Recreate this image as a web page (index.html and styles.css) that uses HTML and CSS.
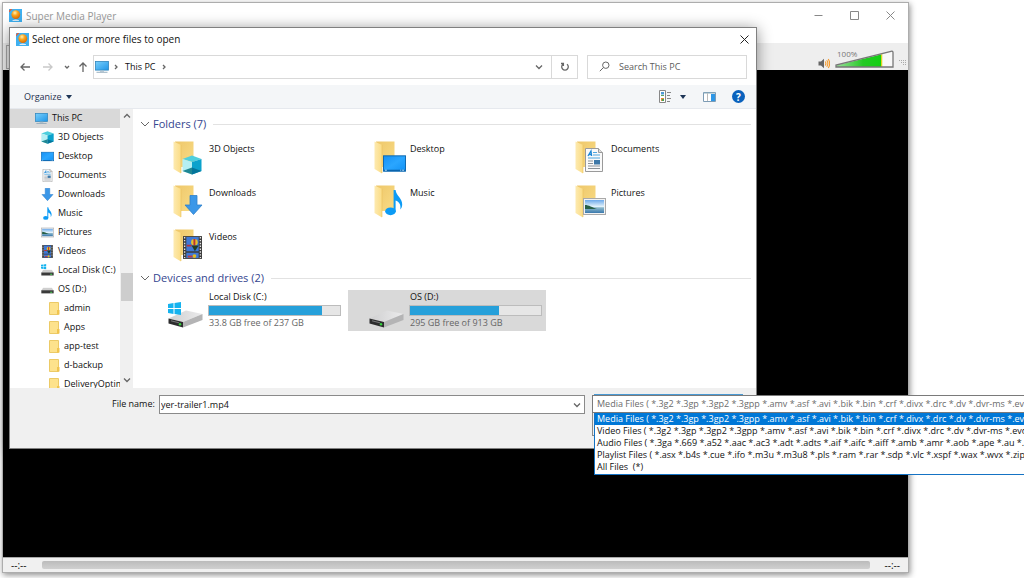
FILE: index.html
```html
<!DOCTYPE html>
<html lang="en">
<head>
<meta charset="utf-8">
<title>Super Media Player</title>
<link rel="stylesheet" href="styles.css">
</head>
<body>
<svg class="sprites" aria-hidden="true">
  <defs>
    <linearGradient id="gFolder" x1="0" y1="0" x2="1" y2="1"><stop offset="0" stop-color="#eec76a"/><stop offset="1" stop-color="#f9dc86"/></linearGradient>
    <linearGradient id="gFlap" x1="0" x2="1"><stop offset="0" stop-color="#fdeab0"/><stop offset="1" stop-color="#fbdc85"/></linearGradient>
    <linearGradient id="gScreen" x1="0" y1="0" x2="1" y2="1"><stop offset="0" stop-color="#7ad0fb"/><stop offset="1" stop-color="#1f95e8"/></linearGradient>
    <linearGradient id="gDesk" x1="0" y1="0" x2="1" y2="1"><stop offset="0" stop-color="#1590f4"/><stop offset=".5" stop-color="#2aa6ff"/><stop offset="1" stop-color="#1191f5"/></linearGradient>
    <linearGradient id="gSky" x1="0" y1="0" x2="0" y2="1"><stop offset="0" stop-color="#6ca9ea"/><stop offset=".5" stop-color="#e2f2fb"/><stop offset=".6" stop-color="#8cb9cb"/><stop offset="1" stop-color="#3a78ad"/></linearGradient>
    <linearGradient id="gVol" x1="0" x2="1"><stop offset="0" stop-color="#9be09b"/><stop offset=".6" stop-color="#25c925"/><stop offset="1" stop-color="#12cf12"/></linearGradient>
    <linearGradient id="gDrive" x1="0" x2="1"><stop offset="0" stop-color="#cfcfd0"/><stop offset="1" stop-color="#ebebec"/></linearGradient>
    <radialGradient id="gBall" cx=".4" cy=".3" r=".7"><stop offset="0" stop-color="#fff0b0"/><stop offset=".45" stop-color="#fba51d"/><stop offset="1" stop-color="#d96a05"/></radialGradient>
  </defs>
  <symbol id="app" viewBox="0 0 13 13"><rect width="13" height="13" fill="#3fb0f0"/><circle cx="6.8" cy="5.6" r="4.4" fill="url(#gBall)"/><path d="M3.5 11.2Q6.8 9.6 10 11.2V12H3.5z" fill="#dceefa"/><path d="M0 3.4L3.4 0H1.4L0 1.4z" fill="#e2603c"/></symbol>
  <symbol id="pc" viewBox="0 0 14 12"><rect x=".5" y=".5" width="13" height="8.6" fill="url(#gScreen)" stroke="#2f86bd" stroke-width=".8"/><path d="M5 9.5h4v1.2H5z" fill="#a8bccb"/><path d="M1.5 10.8h11v.9h-11z" fill="#8da6b8"/></symbol>
  <symbol id="cube" viewBox="0 0 20 20"><path d="M10 .5L19.500 4 10 7 .5 4z" fill="#4fcfdd"/><path d="M.5 4L10 7v12.500L.5 16z" fill="#b5eff3"/><path d="M19.500 4L10 7v12.500L19.500 16z" fill="#0ba2cc"/><path d="M.5 16L10 12.500V19.500z" fill="#1f8794"/><path d="M19.500 16L10 12.500V19.500z" fill="#05759a"/></symbol>
  <symbol id="desk" viewBox="0 0 24 17"><rect x=".5" y=".5" width="23" height="16" fill="url(#gDesk)" stroke="#0c66ae"/><path d="M1 15h22v1.500H1z" fill="#0a64ad"/><path d="M2 15.500h2m14 0h1m1 0h2" stroke="#bfe3fb"/></symbol>
  <symbol id="doc" viewBox="0 0 18 24"><path d="M.5.500h13l4 4v19H.5z" fill="#fafafa" stroke="#9a9a9a"/><path d="M13.500.500v4h4" fill="#dedede" stroke="#9a9a9a"/><path d="M3 8l3-5 .6 5M4 6.500h2.500" fill="none" stroke="#1c87d6" stroke-width="1.300"/><path d="M8 4.500h4M8 7h7M3 10h12" stroke="#4fa6de" stroke-width="1.200"/><path d="M3 13h5M3 15.500h5M3 18h12M3 20.500h12" stroke="#8a9298"/><path d="M9 12h6v4.500H9z" fill="#3d78a8"/></symbol>
  <symbol id="down" viewBox="0 0 18 20"><path d="M5.500.500h7V10h5L9 19.500.500 10h5z" fill="#3b97e8" stroke="#2d80cc" stroke-width=".8"/></symbol>
  <symbol id="note" viewBox="0 0 18 26"><ellipse cx="5.500" cy="21.800" rx="5.300" ry="3.900" fill="#0c9bf5"/><path d="M8.600.500h2C11 6 17.500 9 17.200 15c0 2-.8 4-1.900 5 .8-5-1-7.500-4.700-9V22h-2z" fill="#0c9bf5"/></symbol>
  <symbol id="pic" viewBox="0 0 23 17"><rect x=".5" y=".5" width="22" height="16" fill="#f3f3f3" stroke="#a9a9a9"/><rect x="2" y="2" width="19" height="13" fill="url(#gSky)"/><path d="M2 7c4 0 7 2.500 12 4H2z" fill="#286047"/></symbol>
  <symbol id="film" viewBox="0 0 20 24"><path d="M0 0h20v24H0z" fill="#3c3c3c"/><path d="M3.500 1h13v15h-13zM3.500 17.500h13V23h-13z" fill="#3f78d6"/><path d="M1.700 1v22M18.300 1v22" stroke="#e4e4e4" stroke-width="1.400" stroke-dasharray="1.500 1.500"/><circle cx="12" cy="6.500" r="3.500" fill="#e2c02c"/><path d="M11 3h2v7h-2zM4 9h5v2H4z" fill="#b8323b"/><path d="M9 10l3.500 6 4-6z" fill="#203d24"/><circle cx="12" cy="21" r="2" fill="#e0bc21"/><path d="M5 20.500h5v2H5z" fill="#c23a3d"/></symbol>
  <symbol id="folder" viewBox="0 0 21 33"><path d="M2 .5h18.500V26H6z" fill="url(#gFolder)"/><path d="M.5.500L8 4v28.500L.500 28z" fill="url(#gFlap)"/><path d="M8 4v28" stroke="#eabf5c" stroke-width=".6"/></symbol>
  <symbol id="smallfolder" viewBox="0 0 11 13"><path d="M.5.500h9V12.500h-9z" fill="#fde28c" stroke="#ecca66"/><path d="M8 8h2.500v4.500H8z" fill="#f1c44e"/></symbol>
  <symbol id="win" viewBox="0 0 13 13"><path d="M0 2l5.500-.9V6H0zM6.500 1L13 0v6H6.500zM0 7h5.500v4.900L0 11zM6.500 7H13v6l-6.500-1z" fill="#16b3ef"/></symbol>
  <symbol id="drive" viewBox="0 0 35 18"><path d="M.5 8.500L18 .5 34.500 4 15 12z" fill="url(#gDrive)"/><path d="M15 12L34.500 4v6L15 17.500z" fill="#b4b4b5"/><path d="M.5 8.500L15 12v5.500L.5 13.500z" fill="#2d2d2e"/><path d="M3 10.800l8 2" stroke="#77787a"/><circle cx="12" cy="14.200" r="1.200" fill="#36d63e"/></symbol>
  <symbol id="smalldrive" viewBox="0 0 12 6"><path d="M2 .3h8l1.700 2.700H.3z" fill="#cfcfcf"/><path d="M.3 2.800h11.400v2.900H.3z" fill="#3b3b3b"/><path d="M8.500 4h1.800v.9H8.500z" fill="#4bdc58"/></symbol>
</svg>

<div class="desktop">
  <main class="player">
    <header class="player-title">
      <svg class="app-icon"><use href="#app"/></svg>
      <h1>Super Media Player</h1>
      <div class="window-buttons">
        <button aria-label="Minimize"><svg viewBox="0 0 9 9"><path d="M.5 4.500h8"/></svg></button>
        <button aria-label="Maximize"><svg viewBox="0 0 9 9"><path d="M.5.500h8v8h-8z"/></svg></button>
        <button aria-label="Close"><svg viewBox="0 0 9 9"><path d="M.5.500l8 8m0-8l-8 8"/></svg></button>
      </div>
    </header>
    <div class="player-menu"></div>
    <div class="player-tools">
      <button class="tool" aria-label="Open file"></button>
      <svg class="speaker" viewBox="0 0 12 11"><path d="M.5 3.500H3L6 .8v9.400L3 7.500H.5z" fill="#666"/><path d="M7.200 3.500q1.400 2 0 4M8.700 2.200q2.400 3.300 0 6.600M10.200 1q3 4.500 0 9" fill="none" stroke="#f79a2a" stroke-width="1.100"/></svg>
      <div class="volume">
        <span>100%</span>
        <svg viewBox="0 0 59 18"><path d="M1 17V15.500L46 4.500V17z" fill="url(#gVol)"/><path d="M46 4.500L47.500 4V17H46z" fill="#e0d51c"/><path d="M47.500 4L58 1v16H47.500z" fill="#f8f8f8"/><path d="M1 17V15L56 1.300Q58 .8 58 2.500V17z" fill="none" stroke="#777" stroke-width="1.300"/></svg>
      </div>
      <svg class="grip" viewBox="0 0 7 7"><path d="M0 1.500h7M2 3.500h5M4 5.500h3" stroke="#aaa" stroke-dasharray="1 1"/></svg>
    </div>
    <div class="screen"></div>
    <footer class="player-status"><span>--:--</span><div class="seek"></div><span>--:--</span></footer>
  </main>

  <section class="dialog" role="dialog" aria-labelledby="dialog-title">
    <header class="dialog-title">
      <svg class="app-icon"><use href="#app"/></svg>
      <h2 id="dialog-title">Select one or more files to open</h2>
      <button aria-label="Close"><svg viewBox="0 0 9 9"><path d="M.5.500l8 8m0-8l-8 8"/></svg></button>
    </header>
    <nav class="nav">
      <button class="arrow" aria-label="Back"><svg viewBox="0 0 10 10"><path d="M10 5H1M4.500 1.500L1 5l3.500 3.500"/></svg></button>
      <button class="arrow faded" aria-label="Forward"><svg viewBox="0 0 10 10"><path d="M0 5h9M5.500 1.500L9 5 5.500 8.500"/></svg></button>
      <button class="recent" aria-label="Recent locations"><svg viewBox="0 0 6 6"><path d="M1 2l2 2 2-2"/></svg></button>
      <button class="arrow up" aria-label="Up"><svg viewBox="0 0 10 10"><path d="M5 10V1M1.500 4.500L5 1l3.500 3.500"/></svg></button>
      <div class="address">
        <svg class="pc-icon"><use href="#pc"/></svg>
        <svg class="crumb" viewBox="0 0 6 6"><path d="M2 1l2 2-2 2"/></svg>
        <span>This PC</span>
        <svg class="crumb" viewBox="0 0 6 6"><path d="M2 1l2 2-2 2"/></svg>
        <button class="expand" aria-label="Previous locations"><svg viewBox="0 0 8 8"><path d="M1 2.500l3 3 3-3"/></svg></button>
        <button class="refresh" aria-label="Refresh"><svg viewBox="0 0 10 10"><path d="M7 2.200A3.300 3.300 0 1 1 3 2.200M3.400 4V1.500H1"/></svg></button>
      </div>
      <div class="search">
        <svg viewBox="0 0 11 11"><circle cx="6.800" cy="4.200" r="3.200"/><path d="M4.500 6.500L.800 10.200"/></svg>
        <input type="search" aria-label="Search This PC" placeholder="Search This PC">
      </div>
    </nav>
    <div class="toolbar">
      <button class="organize">Organize <i class="caret"></i></button>
      <button class="view" aria-label="Change view"><svg viewBox="0 0 13 13"><path d="M.5.500h6v12h-6z" fill="#fff" stroke="#888"/><path d="M2 2h3v2.500H2z" fill="#4f9bd8"/><path d="M2 5h3v1H2z" fill="#5aa565"/><path d="M2 8h3v3H2z" fill="#e28d3a"/><path d="M3 9h2v2H3z" fill="#4aa153"/><path d="M8 2.500h4M8 5.500h3M8 8.500h4M8 11.500h3" stroke="#888"/></svg><i class="caret"></i></button>
      <button class="preview" aria-label="Preview pane"><svg viewBox="0 0 13 10"><path d="M.5.500h12v9H.500z" fill="#fff" stroke="#7d9cb5"/><path d="M1 1h11" stroke="#8ab"/><path d="M8 2h4v7H8z" fill="#2e97e6"/><path d="M4.500 1v8" stroke="#bbb"/></svg></button>
      <button class="help" aria-label="Help">?</button>
    </div>
    <div class="browser">
      <ul class="tree">
        <li class="root"><svg><use href="#pc"/></svg>This PC</li>
        <li><svg><use href="#cube"/></svg>3D Objects</li>
        <li><svg><use href="#desk"/></svg>Desktop</li>
        <li><svg><use href="#doc"/></svg>Documents</li>
        <li><svg><use href="#down"/></svg>Downloads</li>
        <li><svg><use href="#note"/></svg>Music</li>
        <li><svg><use href="#pic"/></svg>Pictures</li>
        <li><svg><use href="#film"/></svg>Videos</li>
        <li><svg viewBox="0 0 12 12"><use href="#win" width="5" height="5"/><use href="#smalldrive" y="5" width="12" height="6"/></svg>Local Disk (C:)</li>
        <li><svg viewBox="0 0 12 12"><use href="#smalldrive" y="4" width="12" height="6"/></svg>OS (D:)</li>
        <li class="sub"><svg><use href="#smallfolder"/></svg>admin</li>
        <li class="sub"><svg><use href="#smallfolder"/></svg>Apps</li>
        <li class="sub"><svg><use href="#smallfolder"/></svg>app-test</li>
        <li class="sub"><svg><use href="#smallfolder"/></svg>d-backup</li>
        <li class="sub"><svg><use href="#smallfolder"/></svg>DeliveryOptim</li>
      </ul>
      <div class="scrollbar">
        <svg viewBox="0 0 8 8"><path d="M1 5.500l3-3 3 3"/></svg>
        <div class="thumb"></div>
        <svg viewBox="0 0 8 8"><path d="M1 2.500l3 3 3-3"/></svg>
      </div>
      <div class="files">
        <h3><svg viewBox="0 0 10 8"><path d="M1 2l4 4 4-4"/></svg>Folders (7)</h3>
        <div class="tiles">
          <div class="tile"><svg viewBox="0 0 34 36"><use href="#folder" width="21" height="33"/><use href="#cube" x="9" y="14" width="20" height="20"/></svg><span>3D Objects</span></div>
          <div class="tile"><svg viewBox="0 0 34 36"><use href="#folder" width="21" height="33"/><use href="#desk" x="9" y="14" width="23" height="17"/></svg><span>Desktop</span></div>
          <div class="tile"><svg viewBox="0 0 34 36"><use href="#folder" width="21" height="33"/><use href="#doc" x="10" y="7" width="18" height="24"/></svg><span>Documents</span></div>
          <div class="tile"><svg viewBox="0 0 34 36"><use href="#folder" width="21" height="33"/><use href="#down" x="11" y="10" width="19" height="20"/></svg><span>Downloads</span></div>
          <div class="tile"><svg viewBox="0 0 34 36"><use href="#folder" width="21" height="33"/><use href="#note" x="11" y="4" width="18" height="27"/></svg><span>Music</span></div>
          <div class="tile"><svg viewBox="0 0 34 36"><use href="#folder" width="21" height="33"/><use href="#pic" x="8" y="13" width="23" height="17"/></svg><span>Pictures</span></div>
          <div class="tile"><svg viewBox="0 0 34 36"><use href="#folder" width="21" height="33"/><use href="#film" x="10" y="7" width="19" height="23"/></svg><span>Videos</span></div>
        </div>
        <h3><svg viewBox="0 0 10 8"><path d="M1 2l4 4 4-4"/></svg>Devices and drives (2)</h3>
        <div class="drives">
          <div class="drive">
            <svg viewBox="0 0 36 26"><use href="#drive" x="0" y="8" width="35" height="18"/><use href="#win" x="0" y="0" width="13" height="13"/></svg>
            <div><span>Local Disk (C:)</span><div class="meter"><div style="width:86%"></div></div><small>33.8 GB free of 237 GB</small></div>
          </div>
          <div class="drive selected">
            <svg viewBox="0 0 36 26"><use href="#drive" x="0" y="8" width="35" height="18"/></svg>
            <div><span>OS (D:)</span><div class="meter"><div style="width:68%"></div></div><small>295 GB free of 913 GB</small></div>
          </div>
        </div>
      </div>
    </div>
    <footer class="name-row">
      <label for="filename">File name:</label>
      <div class="combo"><input id="filename" type="text" value="yer-trailer1.mp4"><svg viewBox="0 0 8 8"><path d="M1 2.500l3 3 3-3"/></svg></div>
    </footer>
  </section>

  <section class="filter" aria-label="File type">
    <button class="filter-value">Media Files ( *.3g2 *.3gp *.3gp2 *.3gpp *.amv *.asf *.avi *.bik *.bin *.crf *.divx *.drc *.dv *.dvr-ms *.evo *</button>
    <ul class="filter-list" role="listbox">
      <li class="active" role="option" aria-selected="true">Media Files ( *.3g2 *.3gp *.3gp2 *.3gpp *.amv *.asf *.avi *.bik *.bin *.crf *.divx *.drc *.dv *.dvr-ms *.evo *</li>
      <li role="option">Video Files ( *.3g2 *.3gp *.3gp2 *.3gpp *.amv *.asf *.avi *.bik *.bin *.crf *.divx *.drc *.dv *.dvr-ms *.evo *.</li>
      <li role="option">Audio Files ( *.3ga *.669 *.a52 *.aac *.ac3 *.adt *.adts *.aif *.aifc *.aiff *.amb *.amr *.aob *.ape *.au *.awb</li>
      <li role="option">Playlist Files ( *.asx *.b4s *.cue *.ifo *.m3u *.m3u8 *.pls *.ram *.rar *.sdp *.vlc *.xspf *.wax *.wvx *.zip *.co</li>
      <li role="option">All Files&nbsp; (*)</li>
    </ul>
  </section>
</div>
</body>
</html>
```
FILE: styles.css
```css
* { box-sizing: border-box; }
body { margin: 0; background: #fff; color: #111; font: 9px/12px "Open Sans", "Noto Sans", sans-serif; overflow: hidden; }
h1, h2, h3, ul { margin: 0; padding: 0; font-size: inherit; font-weight: normal; }
ul { list-style: none; }
button, input { margin: 0; padding: 0; border: 0; background: none; color: inherit; font: inherit; outline: 0; }
button { display: flex; align-items: center; justify-content: center; }
svg { display: block; flex: none; }
.sprites { position: absolute; width: 0; height: 0; }

.desktop { position: relative; display: flex; min-height: 100vh; padding: 2px 115px 5px 2px; }
.player { flex: 1; display: flex; flex-direction: column; background: #fff; border: 1px solid #adadad; box-shadow: 1px 2px 6px rgba(0, 0, 0, .45); }
.player-title { display: flex; align-items: center; gap: 4px; height: 25px; padding: 0 13px 0 6px; color: #999; }
.player-title h1, .dialog-title h2 { font-size: 10px; }
.app-icon { width: 13px; height: 13px; }
.window-buttons { display: flex; gap: 27px; margin-left: auto; }
.window-buttons svg { width: 9px; height: 9px; }
.window-buttons path, .dialog-title button path { fill: none; stroke: #888; }
.player-menu { height: 15px; }
.player-tools { display: flex; align-items: flex-end; height: 27px; padding: 0 2px 1px 3px; background: #eee; }
.tool { width: 24px; height: 24px; margin-right: auto; border: 1px solid #aaa; }
.speaker { width: 12px; height: 11px; margin-right: 5px; }
.volume { position: relative; width: 59px; height: 19px; }
.volume svg { width: 59px; height: 18px; }
.volume span { position: absolute; left: 2px; top: -1px; font-size: 8px; line-height: 10px; color: #777; }
.grip { width: 7px; height: 7px; margin: 0 0 3px 5px; }
.screen { flex: 1; background: #000; border-bottom: 1px solid #aaa; }
.player-status { display: flex; align-items: center; gap: 15px; height: 14px; padding: 0 8px; background: #f0f0f0; font-size: 10px; }
.seek { flex: 1; height: 8px; border-radius: 2px; background: linear-gradient(#bbb, #d0d0d0); }

.dialog { position: absolute; left: 9px; top: 27px; right: 267px; border: 1px solid #808080; background: #fff; box-shadow: 0 2px 14px rgba(0, 0, 0, .45); }
.dialog-title { display: flex; align-items: center; gap: 3px; height: 26px; padding: 0 7px 4px 6px; }
.dialog-title h2 { flex: 1; }
.dialog-title button svg { width: 9px; height: 9px; }
.dialog-title button path { stroke: #222; }
.nav { display: flex; align-items: center; height: 31px; padding: 0 9px 6px 10px; }
.nav path, .nav circle, .scrollbar path, .files h3 path, .combo path { fill: none; stroke: #666; stroke-width: 1.3; }
.arrow svg { width: 10px; height: 10px; }
.arrow { margin-right: 13px; }
.arrow.faded { margin-right: 11px; opacity: .35; }
.recent { margin-right: 8px; }
.recent svg { width: 6px; height: 6px; }
.arrow.up { margin-right: 5px; }
.address { display: flex; flex: 1; align-items: center; height: 24px; padding-left: 1px; border: 1px solid #d9d9d9; }
.pc-icon { width: 14px; height: 12px; }
.crumb { width: 6px; height: 6px; margin: 0 6px 0 4px; }
.address span + .crumb { margin-left: 6px; }
.expand { width: 24px; height: 22px; margin-left: auto; }
.expand svg { width: 8px; height: 8px; }
.refresh { width: 26px; height: 22px; border-left: 1px solid #d9d9d9; }
.refresh svg { width: 10px; height: 10px; }
.search { display: flex; align-items: center; width: 160px; height: 24px; margin-left: 9px; padding-left: 11px; border: 1px solid #d9d9d9; }
.search svg { width: 11px; height: 11px; margin-right: 9px; }
.search svg * { stroke-width: 1; }
.search input { width: 120px; }
.search input::placeholder { color: #5c5c5c; opacity: 1; }
.toolbar { display: flex; align-items: center; height: 24px; padding: 0 11px 0 14px; background: #f4f6f8; border-bottom: 1px solid #e6e9ee; color: #1f2f4d; }
.organize { gap: 4px; margin-right: auto; }
.caret { border: 3px solid transparent; border-top: 4px solid #1d3556; border-bottom: 0; }
.view { gap: 8px; margin-right: 17px; }
.view svg { width: 13px; height: 13px; }
.preview { margin-right: 16px; }
.preview svg { width: 13px; height: 10px; }
.help { width: 13px; height: 13px; border-radius: 50%; background: #0a62bd; color: #fff; font-size: 10px; font-weight: bold; }

.browser { display: flex; height: 279px; }
.tree { width: 110px; overflow: hidden; }
.tree li { display: flex; align-items: center; gap: 4px; height: 19px; padding: 0 0 1px 31px; white-space: nowrap; }
.tree svg { width: 13px; height: 13px; }
.tree .root { padding-left: 25px; background: #d9d9d9; }
.tree .sub { gap: 3px; padding-left: 38px; }
.scrollbar { display: flex; flex-direction: column; align-items: center; width: 13px; padding: 3px 0 4px; background: #f0f0f0; }
.scrollbar svg { width: 8px; height: 8px; }
.thumb { width: 12px; height: 28px; margin: 153px 0 auto; background: #cdcdcd; }
.files { flex: 1; padding: 7px 5px 0 7px; }
.files h3 { display: flex; align-items: center; gap: 3px; height: 16px; font-size: 11px; line-height: 16px; color: #34458f; }
.files h3 svg { width: 10px; height: 8px; }
.files h3 path { stroke-width: 1; }
.files h3::after { content: ""; flex: 1; height: 1px; margin-left: 4px; background: #e2e2e2; }
.tiles { display: grid; grid-template-columns: repeat(3, 198px); grid-auto-rows: 44px; column-gap: 3px; padding: 9px 0 0 7px; margin-bottom: -3px; }
.tile { display: flex; gap: 2px; padding-left: 26px; }
.tile svg { width: 34px; height: 36px; }
.tile span { padding-top: 2px; }
.drives { display: grid; grid-template-columns: repeat(2, 198px); column-gap: 3px; padding: 4px 0 0 7px; }
.drive { display: flex; gap: 4px; height: 41px; padding: 2px 4px 0 21px; }
.drive > svg { width: 36px; height: 26px; margin-top: 10px; }
.drive > div { flex: 1; }
.drive span, .drive small { display: block; padding-left: 1px; }
.drive span { margin-top: -1px; }
.drive small { font-size: 9px; color: #666; }
.selected { background: #d9d9d9; }
.meter { height: 11px; margin: 2px 0 1px; border: 1px solid #bcbcbc; background: #e6e6e6; }
.meter div { height: 100%; background: #26a0da; }

.name-row { display: flex; align-items: flex-start; height: 60px; padding: 7px 171px 0 102px; background: #f0f0f0; }
.name-row label { width: 47px; line-height: 18px; white-space: nowrap; }
.combo { display: flex; flex: 1; align-items: center; height: 19px; padding: 0 3px 0 1px; border: 1px solid #8a8a8a; background: #fff; }
.combo input { flex: 1; }
.combo svg { width: 8px; height: 8px; }

.filter { position: absolute; left: 592px; right: 0; top: 394px; padding-top: 1px; overflow: hidden; white-space: nowrap; }
.filter::before { content: ""; position: absolute; left: 0; top: 1px; width: 3px; height: 39px; border: 1px solid #8a8a8a; border-right: 0; background: #f0f0f0; z-index: -1; }
.filter::after { content: ""; position: absolute; left: 2px; top: 0; width: 149px; height: 1px; background: #4a9ad4; }
.filter { z-index: 1; }
.filter-value { display: block; width: 100%; height: 18px; padding-left: 4px; border: 1px solid #7a7a7a; border-right: 0; background: #fff; color: #6b6b6b; text-align: left; }
.filter-list { margin-left: 2px; padding-bottom: 1px; border: 1px solid #1573c4; border-right: 0; border-top: 0; background: #fff; }
.filter-list li { height: 12px; padding-left: 2px; }
.filter-list .active { background: #0078d7; color: #fff; }
```
